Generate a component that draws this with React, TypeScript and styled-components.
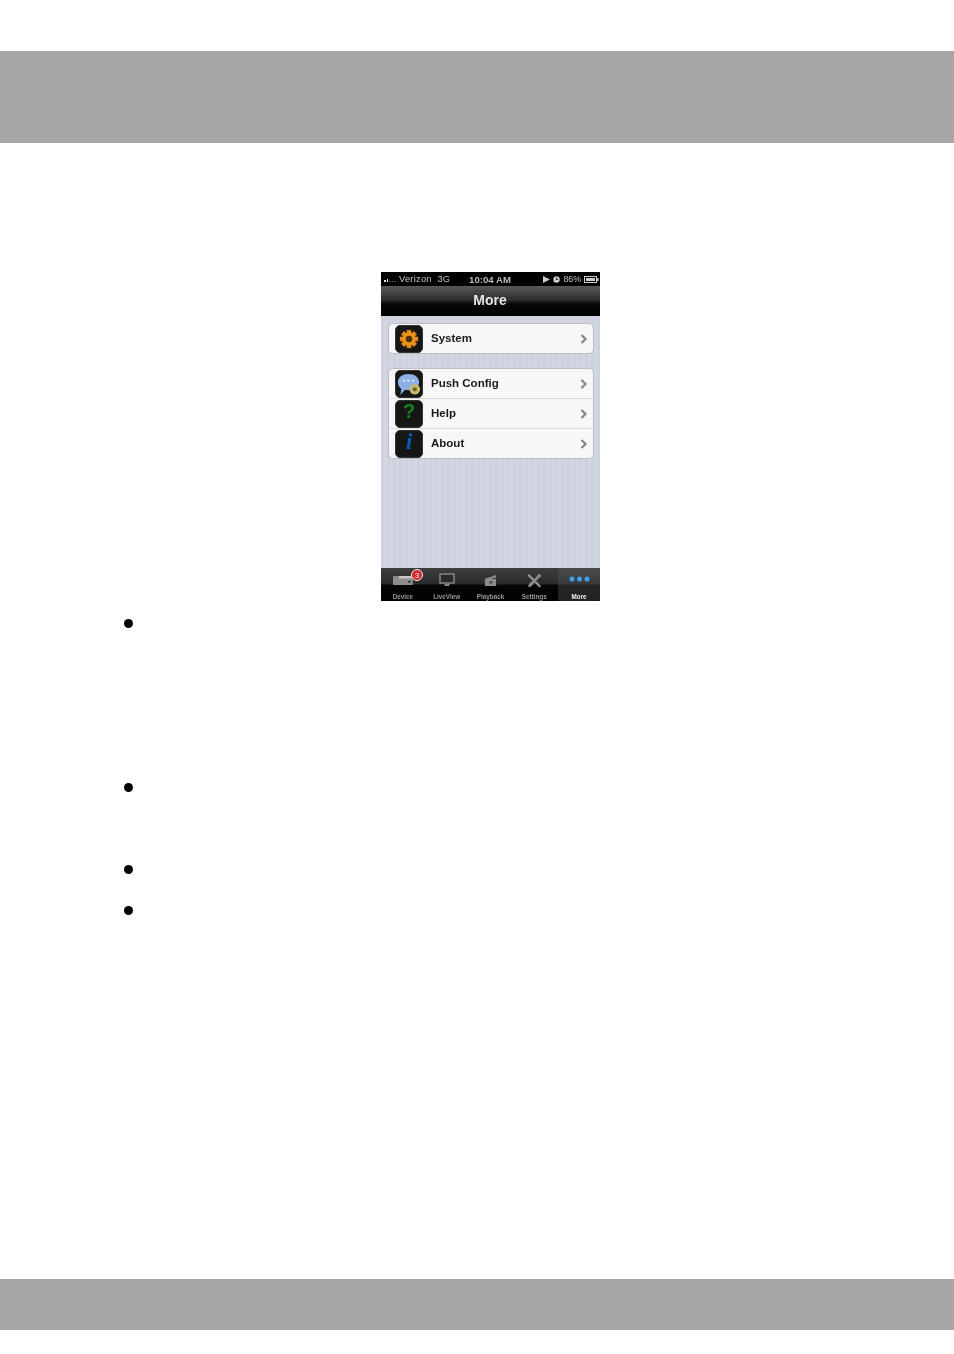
import React from "react";
import styled, { createGlobalStyle } from "styled-components";

const Global = createGlobalStyle`
  html, body { margin: 0; padding: 0; background: #fff; }
  body { font-family: "Liberation Sans", Arial, sans-serif; }
`;
const Page = styled.div`
  width: 954px; height: 1354px; display: flex; flex-direction: column; overflow: hidden;
`;
const Band = styled.div<{ $h: number; $mt: number }>`
  height: ${p => p.$h}px; margin-top: ${p => p.$mt}px; background: #a6a6a6; flex: none;
`;
const Main = styled.main`
  height: 1136px; flex: none; display: flex; flex-direction: column; padding-top: 129px; box-sizing: border-box;
`;
const Phone = styled.div`
  width: 219px; height: 329px; margin-left: 381px; display: flex; flex-direction: column;
  filter: blur(0.4px); background: #000; flex: none;
`;
const Status = styled.div`
  height: 14px; background: #000; color: #c4c4c4; font-size: 9.3px; font-weight: 700; padding: 0 1px 0 3px;
  display: grid; grid-template-columns: 81px 50px 1fr; align-items: center; flex: none;
`;
const Carrier = styled.div`display: flex; align-items: center; gap: 2px; white-space: nowrap;`;
const Signal = styled.span`display: flex; align-items: flex-end; gap: 1px; height: 5px; width: 13px;`;
const SignalBar = styled.i<{ $h: number; $on: boolean }>`
  display: block; width: 1.5px; height: ${p => p.$h}px; background: ${p => (p.$on ? "#e4e4e4" : "#5a5a5a")};
`;
const CarrierName = styled.span`font-weight: 400; letter-spacing: 0.25px;`;
const Clock = styled.div`text-align: center; font-weight: 700; color: #bdbdbd; font-size: 9.6px; white-space: nowrap;`;
const StatusRight = styled.div`
  display: flex; align-items: center; justify-content: flex-end; gap: 3px; font-size: 8.8px; font-weight: 400;
`;
const Nav = styled.div`
  height: 30px; flex: none; display: flex; align-items: center; justify-content: center; padding: 0 1px 2px 0;
  background: linear-gradient(#585858 0%, #2f2f2f 45%, #080808 60%, #000 100%);
  color: #e2e2e2; font-weight: 700; font-size: 14px; box-sizing: border-box;
`;
const Content = styled.div`
  height: 252px; flex: none; padding: 7px 6px 0 7px; box-sizing: border-box; display: flex; flex-direction: column; gap: 14px;
  background: repeating-linear-gradient(90deg, #cdd2de 0 3px, #d1d6e1 3px 6px);
`;
const Group = styled.div`
  background: #f7f7f7; border: 1px solid #bcbfc6; border-radius: 5px;
`;
const Row = styled.div<{ $first?: boolean }>`
  height: ${p => (p.$first ? 29 : 30)}px; display: flex; align-items: center; box-sizing: border-box; padding: 0 6px;
  border-top: ${p => (p.$first ? "none" : "1px solid #d9d9d9")};
  color: #1a1a1a; font-weight: 700; font-size: 11.5px;
`;
const IconTile = styled.span`
  width: 28px; height: 28px; flex: none; border-radius: 5px; background: #161616; display: flex; align-items: center; justify-content: center;
  margin-right: 8px; box-sizing: border-box; border: 1px solid #333;
`;
const Label = styled.span`flex: 1; padding-bottom: 1px;`;
const TabBar = styled.div`
  height: 33px; flex: none; display: grid; grid-template-columns: repeat(5, 1fr);
  background: linear-gradient(#3e3e3e 0%, #2a2a2a 48%, #050505 52%, #000 100%);
`;
const Tab = styled.div<{ $active?: boolean }>`
  position: relative; display: flex; flex-direction: column; align-items: center; justify-content: flex-end;
  color: ${p => (p.$active ? "#f0f0f0" : "#9a9a9a")}; font-size: 6.3px; font-weight: 700; padding-bottom: 1px;
  border-radius: 2px; margin-left: ${p => (p.$active ? 2 : 0)}px;
  background: ${p => (p.$active ? "linear-gradient(#4a4a4a 0%, #3a3a3a 48%, #242424 52%, #222 100%)" : "transparent")};
`;
const TabIcon = styled.div`height: 18px; display: flex; align-items: center; justify-content: center; margin-bottom: 4px;`;
const Badge = styled.span`
  position: absolute; top: 1px; left: 30px; width: 12px; height: 12px; border-radius: 50%; background: #d8262c;
  border: 1px solid #eee; box-sizing: border-box; color: #fff; font-size: 7.5px; font-weight: 400;
  display: flex; align-items: center; justify-content: center;
`;
const Bullets = styled.ul`list-style: none; margin: 0; padding: 0 0 0 124px;`;
const Bullet = styled.li<{ $h: number }>`
  height: ${p => p.$h}px; display: flex; align-items: flex-start;
  &::before { content: ""; width: 9px; height: 9px; border-radius: 50%; background: #000; margin-top: 18px; }
`;

const Chevron = () => (
  <svg width="7" height="10" viewBox="0 0 7 10">
    <path d="M1.500 1 L5.500 5 L1.500 9" fill="none" stroke="#858585" strokeWidth="2.200" />
  </svg>
);

const gearTeeth = Array.from({ length: 8 }, (_, i) => i * 45);
const Gear = () => (
  <svg width="20" height="20" viewBox="0 0 22 22">
    {gearTeeth.map(a => (
      <rect key={a} x="8.500" y="1" width="5" height="5" fill="#e08a16" transform={`rotate(${a} 11 11)`} />
    ))}
    <circle cx="11" cy="11" r="7.500" fill="#e8951a" />
    <circle cx="11" cy="11" r="3.600" fill="#4a3210" />
  </svg>
);
const PushIcon = () => (
  <svg width="26" height="26" viewBox="0 0 27 27">
    <path d="M13 3c6.500 0 11 3.600 11 8.500s-4.500 8.500-11 8.500c-1.300 0-2.500-.1-3.600-.4L4.500 25l1-6.300C3.300 16.900 2 14.500 2 11.500 2 6.600 6.500 3 13 3z" fill="#8fb0e6" />
    <circle cx="8.500" cy="10" r="1.200" fill="#dfe8f8" />
    <circle cx="13" cy="10" r="1.200" fill="#dfe8f8" />
    <circle cx="17.500" cy="10" r="1.200" fill="#dfe8f8" />
    <circle cx="19.500" cy="19" r="5.500" fill="#c9b66a" />
    <circle cx="19.500" cy="19" r="2.200" fill="#6c6238" />
  </svg>
);
const HelpGlyph = styled.span`color: #14851c; font-size: 20px; font-weight: 700; line-height: 1; padding-bottom: 5px;`;
const InfoGlyph = styled.span`color: #0d58b0; font-family: "Liberation Serif", serif; font-style: italic; font-size: 24px; font-weight: 700; line-height: 1; padding-bottom: 5px;`;

const Device = () => (
  <svg width="20" height="10" viewBox="0 0 20 10">
    <rect x="0" y="1" width="20" height="9" rx="1" fill="#8c8c8c" />
    <rect x="6" y="1" width="12" height="2.500" fill="#c4c4c4" />
    <rect x="15" y="6" width="3" height="1.500" fill="#333" />
  </svg>
);
const Monitor = () => (
  <svg width="16" height="14" viewBox="0 0 16 14">
    <rect x="1" y="1" width="14" height="9" fill="#2a2a2a" stroke="#858585" strokeWidth="1.500" />
    <rect x="5.500" y="11" width="5" height="2" fill="#858585" />
  </svg>
);
const Film = () => (
  <svg width="13" height="13" viewBox="0 0 14 14">
    <path d="M1 5 L13 1 V4 L7 5.500 H13 V13 H1 Z" fill="#8c8c8c" />
    <rect x="6" y="8" width="3" height="2" fill="#333" />
  </svg>
);
const Tools = () => (
  <svg width="15" height="15" viewBox="0 0 15 15">
    <path d="M2 1 L14 13 L12.500 14.500 L0.500 2.500 Z" fill="#999" />
    <path d="M12 0.500 L14.500 3 L12 5 L4.500 13 L2.500 14.500 L1 13 L2.500 10.500 L10 3 Z" fill="#8a8a8a" />
  </svg>
);
const Dots = () => (
  <svg width="21" height="8" viewBox="0 0 21 8">
    <circle cx="3" cy="3" r="2.500" fill="#3ea2f2" />
    <circle cx="10.500" cy="3" r="2.500" fill="#3ea2f2" />
    <circle cx="18" cy="3" r="2.500" fill="#3ea2f2" />
  </svg>
);
const Battery = () => (
  <svg width="15" height="7" viewBox="0 0 15 7">
    <rect x=".5" y=".5" width="12" height="6" fill="none" stroke="#ccc" />
    <rect x="2" y="2" width="9" height="3" fill="#ccc" />
    <rect x="13" y="2" width="1.500" height="3" fill="#ccc" />
  </svg>
);
const Play = () => (
  <svg width="7" height="7" viewBox="0 0 7 7"><path d="M0 0 L7 3.500 L0 7 Z" fill="#ccc" /></svg>
);
const Alarm = () => (
  <svg width="7" height="7" viewBox="0 0 7 7">
    <circle cx="3.500" cy="3.500" r="3.200" fill="#ccc" />
    <path d="M3.500 1.500 V3.500 H5" stroke="#222" fill="none" />
  </svg>
);

const rows = [
  { label: "Push Config", icon: <PushIcon /> },
  { label: "Help", icon: <HelpGlyph>?</HelpGlyph> },
  { label: "About", icon: <InfoGlyph>i</InfoGlyph> },
];
const tabs = [
  { label: "LiveView", icon: <Monitor /> },
  { label: "Playback", icon: <Film /> },
  { label: "Settings", icon: <Tools /> },
];

export default function App() {
  return (
    <Page>
      <Global />
      <Band $h={92} $mt={51} />
      <Main>
        <Phone>
          <Status>
            <Carrier>
              <Signal>
                {[2, 3, 1, 1, 1].map((h, i) => <SignalBar key={i} $h={h} $on={i < 2} />)}
              </Signal>
              <CarrierName>Verizon&nbsp;&nbsp;3G</CarrierName>
            </Carrier>
            <Clock>10:04 AM</Clock>
            <StatusRight><Play /><Alarm /><span>86%</span><Battery /></StatusRight>
          </Status>
          <Nav>More</Nav>
          <Content>
            <Group>
              <Row $first>
                <IconTile><Gear /></IconTile>
                <Label>System</Label>
                <Chevron />
              </Row>
            </Group>
            <Group>
              {rows.map((r, i) => (
                <Row key={r.label} $first={i === 0}>
                  <IconTile>{r.icon}</IconTile>
                  <Label>{r.label}</Label>
                  <Chevron />
                </Row>
              ))}
            </Group>
          </Content>
          <TabBar>
            <Tab>
              <TabIcon><Device /></TabIcon>
              <Badge>3</Badge>
              Device
            </Tab>
            {tabs.map(t => (
              <Tab key={t.label}>
                <TabIcon>{t.icon}</TabIcon>
                {t.label}
              </Tab>
            ))}
            <Tab $active>
              <TabIcon><Dots /></TabIcon>
              More
            </Tab>
          </TabBar>
        </Phone>
        <Bullets>
          <Bullet $h={164} />
          <Bullet $h={82} />
          <Bullet $h={41} />
          <Bullet $h={41} />
        </Bullets>
      </Main>
      <Band $h={51} $mt={0} />
    </Page>
  );
}
